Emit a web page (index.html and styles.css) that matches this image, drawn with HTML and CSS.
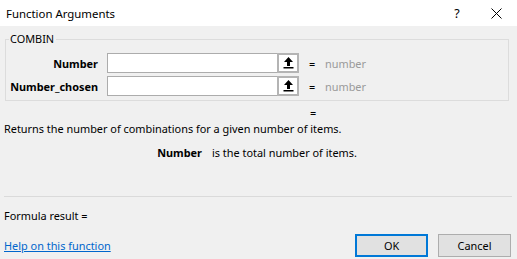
FILE: index.html
```html
<!DOCTYPE html>
<html lang="en">
<head>
    <meta charset="UTF-8">
    <title>Function Arguments</title>
    <link rel="stylesheet" href="styles.css">
</head>
<body>
    <div class="titlebar">
        <span class="title">Function Arguments</span>
        <span class="help-btn">?</span>
        <span class="close-btn">
            <svg width="11" height="11" viewBox="0 0 11 11"><path d="M0.5 0.5 L10.5 10.5 M10.5 0.5 L0.5 10.5" stroke="#000" stroke-width="1" fill="none"/></svg>
        </span>
    </div>

    <div class="dialog">
        <fieldset class="group">
            <legend>COMBIN</legend>
            <div class="args">
                <div class="arg-row">
                    <label class="arg-label">Number</label>
                    <div class="ref-box">
                        <input class="ref-input" type="text">
                        <span class="ref-btn">
                            <svg width="11" height="12" viewBox="0 0 11 12"><path d="M5.5 0 L10 5 L7 5 L7 9 L4 9 L4 5 L1 5 Z" fill="#000"/><rect x="0.5" y="10" width="10" height="1.5" fill="#000"/></svg>
                        </span>
                    </div>
                    <span class="eq">=</span>
                    <span class="arg-value">number</span>
                </div>
                <div class="arg-row">
                    <label class="arg-label">Number_chosen</label>
                    <div class="ref-box">
                        <input class="ref-input" type="text">
                        <span class="ref-btn">
                            <svg width="11" height="12" viewBox="0 0 11 12"><path d="M5.5 0 L10 5 L7 5 L7 9 L4 9 L4 5 L1 5 Z" fill="#000"/><rect x="0.5" y="10" width="10" height="1.5" fill="#000"/></svg>
                        </span>
                    </div>
                    <span class="eq">=</span>
                    <span class="arg-value">number</span>
                </div>
            </div>
        </fieldset>

        <div class="result-line"><span class="eq">=</span></div>
        <p class="desc">Returns the number of combinations for a given number of items.</p>
        <p class="arg-desc"><b>Number</b><span>is the total number of items.</span></p>

        <hr class="sep">

        <p class="formula">Formula result =</p>

        <div class="footer">
            <a class="help-link" href="#">Help on this function</a>
            <button class="btn btn-default">OK</button>
            <button class="btn">Cancel</button>
        </div>
    </div>
</body>
</html>
```

FILE: styles.css
```css
html, body {
    margin: 0;
    padding: 0;
}
body {
    width: 517px;
    height: 259px;
    overflow: hidden;
    background: #f0f0f0;
    font-family: "Noto Sans", "Liberation Sans", sans-serif;
    font-size: 10.9px;
    color: #000;
}
.titlebar {
    height: 26px;
    background: #fff;
    display: flex;
    align-items: center;
}
.title {
    flex: 1;
    padding-left: 6px;
    font-size: 11.4px;
}
.help-btn {
    width: 16px;
    margin-right: 26px;
    font-size: 12.5px;
    text-align: center;
}
.close-btn {
    width: 11px;
    height: 11px;
    margin-right: 15px;
    display: flex;
}
.dialog {
    padding: 0 4px;
}
.group {
    margin: 5px 4px 0 1px;
    padding: 0 0 4px 0;
    border: 1px solid #dcdcdc;
    min-inline-size: 0;
}
.group legend {
    margin-left: 3px;
    padding: 0 2px 0 1px;
    line-height: 16px;
}
.args {
    padding-top: 6px;
    display: flex;
    flex-direction: column;
    gap: 3px;
}
.arg-row {
    display: flex;
    align-items: center;
    height: 20px;
}
.arg-label {
    width: 92px;
    text-align: right;
    font-weight: bold;
    margin-right: 9px;
}
.ref-box {
    display: flex;
    width: 192px;
    height: 20px;
}
.ref-input {
    flex: 1;
    min-width: 0;
    margin: 0;
    padding: 0 3px;
    border: 1px solid #acacac;
    border-right: none;
    background: #fff;
    font: inherit;
    outline: none;
}
.ref-btn {
    width: 18px;
    border: 2px solid #b4b4b4;
    background: #fff;
    display: flex;
    align-items: center;
    justify-content: center;
}
.eq {
    display: inline-block;
    margin-left: 10px;
    width: 16px;
}
.arg-value {
    color: #9a9a9a;
}
.result-line {
    margin-top: 4px;
    height: 16px;
    line-height: 16px;
    padding-left: 296px;
}
.desc {
    margin: 0;
    height: 16px;
    line-height: 16px;
}
.arg-desc {
    margin: 8px 0 0 0;
    height: 16px;
    line-height: 16px;
    display: flex;
}
.arg-desc b {
    width: 198px;
    text-align: right;
    margin-right: 10px;
}
.sep {
    margin: 35px 0 0 0;
    border: none;
    border-top: 1px solid #dadada;
    width: 508px;
}
.formula {
    margin: 11px 0 0 0;
    height: 16px;
    line-height: 16px;
}
.footer {
    margin-top: 10px;
    display: flex;
    align-items: center;
    height: 23px;
}
.help-link {
    flex: 1;
    color: #0066cc;
    text-decoration: underline;
}
.btn {
    width: 73px;
    height: 23px;
    margin: 0 0 0 10px;
    padding: 0;
    border: 1px solid #adadad;
    background: #e1e1e1;
    font: inherit;
    color: #000;
}
.btn-default {
    border: 2px solid #0078d7;
}
.btn:last-child {
    margin-right: 2px;
}
```
